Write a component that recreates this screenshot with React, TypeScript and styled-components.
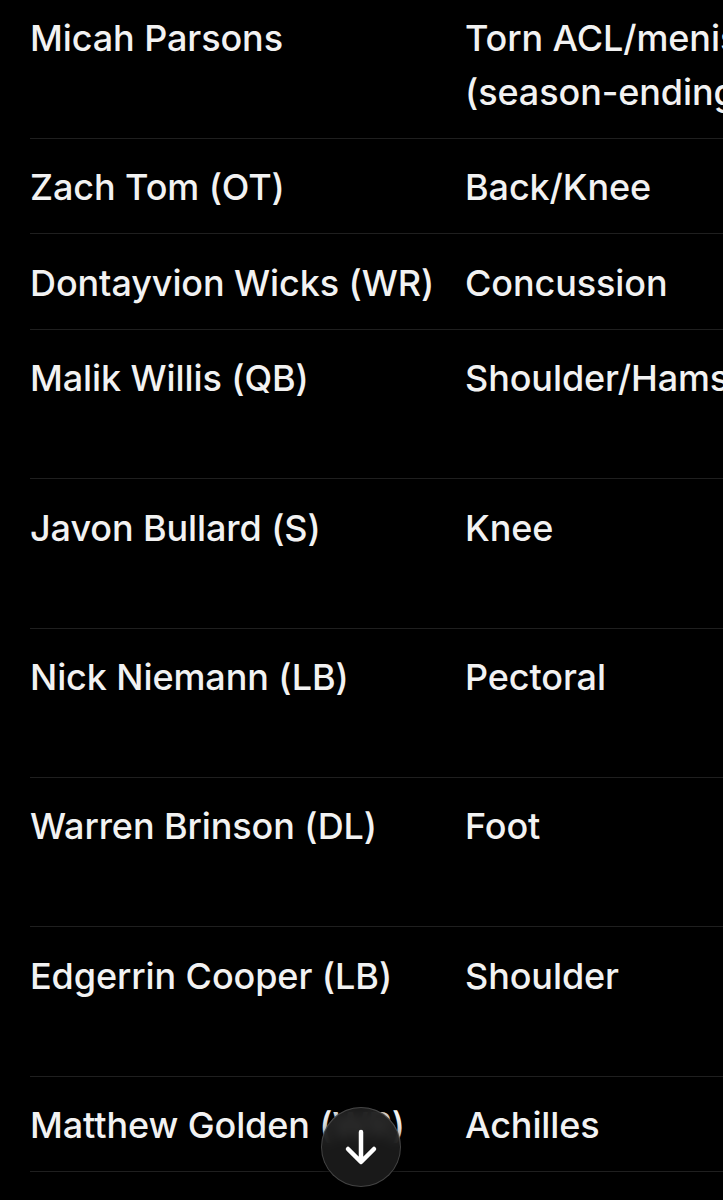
import React from "react";
import styled, { createGlobalStyle } from "styled-components";

const Global = createGlobalStyle`
  html, body { margin: 0; padding: 0; background: #000; }
  body { font-family: Inter, "Open Sans", sans-serif; -webkit-font-smoothing: antialiased; }
`;

const Page = styled.div`
  position: relative;
  width: 723px;
  height: 1200px;
  overflow: hidden;
  background: #000;
`;

const Scroller = styled.div`
  margin-top: -10.4px;
  padding-left: 30px;
`;

const Table = styled.div`
  display: grid;
  grid-template-columns: 435px 600px;
  width: 1035px;
`;

const Row = styled.div`
  display: contents;
`;

const Cell = styled.div<{ $last?: boolean }>`
  padding: 21.4px 0 19px;
  border-bottom: ${(p) => (p.$last ? "none" : "1px solid #1f1f1f")};
  font-size: 36px;
  font-weight: 500;
  line-height: 54px;
  color: #f2f2f2;
  letter-spacing: -0.1px;
  white-space: nowrap;
`;

const Spacer = styled.div<{ $lines: number }>`
  height: ${(p) => p.$lines * 54}px;
`;

const ScrollButton = styled.button`
  position: absolute;
  left: 321px;
  top: 1107px;
  width: 80px;
  height: 80px;
  border-radius: 50%;
  border: 1.5px solid rgba(120, 120, 120, 0.45);
  background: rgba(28, 28, 28, 0.88);
  backdrop-filter: blur(6px);
  display: flex;
  align-items: center;
  justify-content: center;
  padding: 0;
  box-shadow: 0 2px 10px rgba(0, 0, 0, 0.6);
`;

const rows: { name: string; injury: string[]; lines: number }[] = [
  { name: "Micah Parsons", injury: ["Torn ACL/meniscus", "(season-ending)"], lines: 2 },
  { name: "Zach Tom (OT)", injury: ["Back/Knee"], lines: 1 },
  { name: "Dontayvion Wicks (WR)", injury: ["Concussion"], lines: 1 },
  { name: "Malik Willis (QB)", injury: ["Shoulder/Hamstring"], lines: 2 },
  { name: "Javon Bullard (S)", injury: ["Knee"], lines: 2 },
  { name: "Nick Niemann (LB)", injury: ["Pectoral"], lines: 2 },
  { name: "Warren Brinson (DL)", injury: ["Foot"], lines: 2 },
  { name: "Edgerrin Cooper (LB)", injury: ["Shoulder"], lines: 2 },
  { name: "Matthew Golden (WR)", injury: ["Achilles"], lines: 1 },
  { name: "Christian Watson (WR)", injury: ["Knee"], lines: 1 },
];

const Line = styled.div``;

export default function App() {
  return (
    <Page>
      <Global />
      <Scroller>
        <Table>
          {rows.map((r, i) => (
            <Row key={i}>
              <Cell>
                <Line>{r.name}</Line>
                {r.lines > 1 && <Spacer $lines={r.lines - 1} />}
              </Cell>
              <Cell>
                {r.injury.map((t, j) => (
                  <Line key={j}>{t}</Line>
                ))}
              </Cell>
            </Row>
          ))}
        </Table>
      </Scroller>
      <ScrollButton aria-label="Scroll down">
        <svg width="40" height="40" viewBox="0 0 40 40" fill="none">
          <path
            d="M20 5 V34 M7 22 L20 35 L33 22"
            stroke="#fff"
            strokeWidth="4.5"
            strokeLinecap="round"
            strokeLinejoin="round"
          />
        </svg>
      </ScrollButton>
    </Page>
  );
}
